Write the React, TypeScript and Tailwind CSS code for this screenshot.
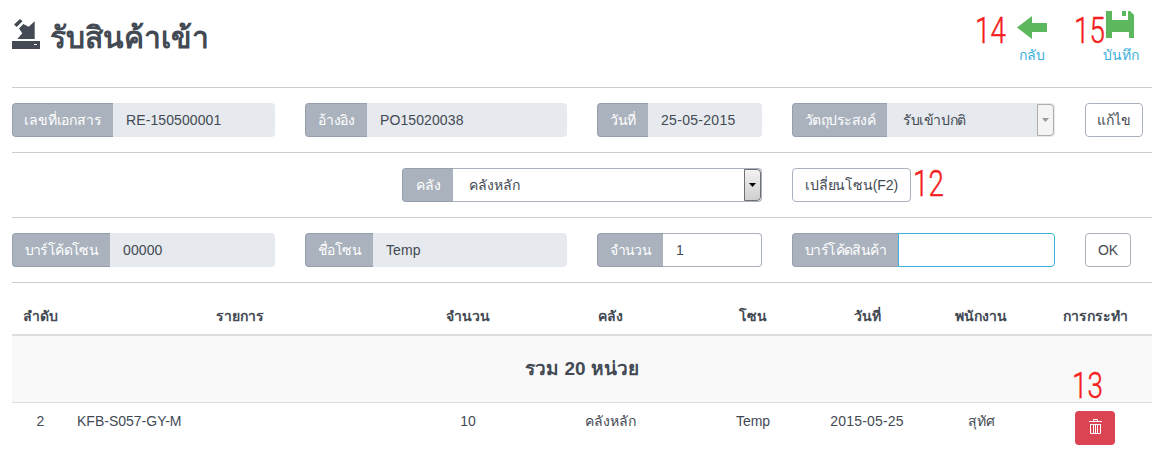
import type { ReactNode } from "react";

function Rule() {
  return <hr className="h-px w-full shrink-0 border-0 bg-[#ccc]" />;
}

function Addon({ width, children }: { width: string; children: ReactNode }) {
  return (
    <span className={`${width} flex h-full shrink-0 items-center justify-center whitespace-nowrap rounded-l border border-r-0 border-[#96a0ad] bg-[#aab2bd] text-white`}>
      {children}
    </span>
  );
}

function Field({ width, addon, label, value, look = "bg-[#e6e9ed]" }: { width: string; addon: string; label: string; value: string; look?: string }) {
  return (
    <div className={`${width} flex h-[34px] shrink-0`}>
      <Addon width={addon}>{label}</Addon>
      <span className={`flex h-full grow items-center rounded-r pl-[13px] tracking-[0.1px] ${look}`}>{value}</span>
    </div>
  );
}

function Caret({ disabled }: { disabled?: boolean }) {
  return (
    <span className={`flex h-8 w-[17px] items-center justify-center rounded-r-sm border ${disabled ? "border-[#adadad] bg-[#f4f4f4]" : "border-[#707070] bg-linear-to-b from-[#f2f2f2] to-[#cfcfcf]"}`}>
      <svg className="h-1 w-[7px]" viewBox="0 0 7 4"><path d="M0 0h7L3.5 4z" fill={disabled ? "#9b9b9b" : "#000"} /></svg>
    </span>
  );
}

function Button({ width, children }: { width: string; children: ReactNode }) {
  return <button className={`${width} flex h-[34px] shrink-0 items-center justify-center whitespace-nowrap rounded border border-[#aab2bd] bg-white tracking-[-0.15px]`}>{children}</button>;
}

function Num({ children, className }: { children: string; className: string }) {
  return (
    <span className={`absolute origin-left scale-x-[0.74] font-['Roboto'] text-[37.5px] font-light leading-[27px] text-[#f41d20] [-webkit-text-stroke:0.5px_#f41d20] ${className}`}>
      {children}
    </span>
  );
}

const heads: [string, string][] = [
  ["w-[57px]", "ลำดับ"], ["w-[342px]", "รายการ"], ["w-[114px]", "จำนวน"], ["w-[171px]", "คลัง"],
  ["w-[114px]", "โซน"], ["w-[114px]", "วันที่"], ["w-[114px]", "พนักงาน"], ["w-[114px]", "การกระทำ"],
];
const row = ["2", "KFB-S057-GY-M", "10", "คลังหลัก", "Temp", "2015-05-25", "สุทัศ"];

export default function App() {
  return (
    <main className="relative flex h-[451px] w-[1164px] flex-col overflow-hidden bg-white px-3 font-['Liberation_Sans',sans-serif] text-[14px] leading-5 text-[#434a54]">
      <header className="flex h-[87px] shrink-0 justify-between">
        <h1 className="flex items-start pt-[18px] text-[30px] font-bold leading-[40px]">
          <svg className="mr-[10px] mt-px h-[31px] w-7" viewBox="0 0 28 31" fill="#434a54">
            <path fillRule="evenodd" d="M0 22h28v8H0zM22 25v1h3v-1z" />
            <path d="M22.7 2.3V20H5.3l5-5.7L7 9.5l4.3-4.6 5.4 2.9zM2 5.5 8 0l2.5 2.2L4.7 8z" />
          </svg>
          <span>รับสินค้าเข้า</span>
        </h1>
        <nav className="flex text-[#3bafda]">
          <div className="mr-[55px] flex w-8 flex-col items-center pt-4">
            <svg className="h-[23px] w-[30px]" viewBox="0 0 30 23" fill="#5cb85c"><path d="M0 11.5 15 0v7h15v9H15v7z" /></svg>
            <span className="mt-[6px]">กลับ</span>
          </div>
          <div className="mr-[13px] flex w-9 flex-col items-center pt-[11px]">
            <svg className="mr-[2px] h-[27px] w-7" viewBox="0 0 28 27" fill="#5cb85c"><path d="M0 0h6v9h16V0h2l4 4v23h-5v-6H6v6H0zM16 0h4v5h-4z" /></svg>
            <span className="mt-[7px] tracking-[-0.1px]">บันทึก</span>
          </div>
        </nav>
      </header>
      <Rule />
      <section className="flex h-16 shrink-0 pt-[15px]">
        <Field width="mr-[30px] w-[263px]" addon="w-[101px] tracking-[-0.2px]" label="เลขที่เอกสาร" value="RE-150500001" />
        <Field width="mr-[30px] w-[262px]" addon="w-[62px] tracking-[-0.3px]" label="อ้างอิง" value="PO15020038" />
        <Field width="mr-[30px] w-[165px]" addon="w-[51px] tracking-[-0.2px]" label="วันที่" value="25-05-2015" look="bg-[#e6e9ed] tracking-[0.3px]" />
        <div className="mr-[30px] flex h-[34px] w-[263px]">
          <Addon width="w-[95px] tracking-[-0.5px]">วัตถุประสงค์</Addon>
          <span className="flex grow items-center justify-between rounded-r bg-[#e6e9ed] pl-4 pr-px"><span className="tracking-[-0.4px]">รับเข้าปกติ</span><Caret disabled /></span>
        </div>
        <Button width="w-[58px]">แก้ไข</Button>
      </section>
      <Rule />
      <section className="flex h-16 shrink-0 pl-[390px] pt-[15px]">
        <div className="mr-[30px] flex h-[34px] w-[360px]">
          <Addon width="w-[51px]">คลัง</Addon>
          <span className="flex grow items-center justify-between rounded-r border border-l-0 border-[#aab2bd] pl-4"><span>คลังหลัก</span><Caret /></span>
        </div>
        <Button width="w-[119px]">เปลี่ยนโซน(F2)</Button>
      </section>
      <Rule />
      <section className="flex h-16 shrink-0 pt-[15px]">
        <Field width="mr-[30px] w-[263px]" addon="w-[98px] tracking-[-0.6px]" label="บาร์โค้ดโซน" value="00000" />
        <Field width="mr-[30px] w-[262px]" addon="w-[68px] tracking-[-0.5px]" label="ชื่อโซน" value="Temp" />
        <Field width="mr-[30px] w-[165px]" addon="w-[66px] tracking-[-0.6px]" label="จำนวน" value="1" look="border border-l-0 border-[#aab2bd]" />
        <Field width="mr-[30px] w-[263px]" addon="w-[106px] tracking-[-0.6px]" label="บาร์โค้ดสินค้า" value="" look="border border-[#3bafda]" />
        <Button width="w-[46px]">OK</Button>
      </section>
      <Rule />
      <div className="flex h-[53px] shrink-0 items-center border-b-2 border-[#ddd] pt-[15px] font-bold">
        {heads.map(([w, t]) => <span key={t} className={`${w} shrink-0 text-center`}>{t}</span>)}
      </div>
      <div className="flex h-[66px] shrink-0 items-center justify-center bg-[#f9f9f9] text-[19px] font-bold">รวม 20 หน่วย</div>
      <div className="flex shrink-0 border-t border-[#ddd] pt-2">
        {row.map((t, i) => <span key={t} className={`${heads[i][0]} shrink-0 ${i === 1 ? "pl-2 text-left" : "text-center"} ${i === 5 ? "tracking-[0.2px]" : ""}`}>{t}</span>)}
        <span className="flex w-[114px] justify-center">
          <button className="flex h-[34px] w-10 items-center justify-center rounded bg-[#da4453]">
            <svg className="mb-[3px] h-[15px] w-[13px]" viewBox="0 0 13 15" fill="none" stroke="#fff"><path d="M0 2.5h13M4.5 2.5v-2h4v2M1.5 5v9.5h10V5M1 5.5h11M4.5 5v9M6.5 5v9M8.5 5v9" /></svg>
          </button>
        </span>
      </div>
      <Num className="left-[975px] top-[17px]">14</Num>
      <Num className="left-[1074px] top-[17px]">15</Num>
      <Num className="left-[913px] top-[170px]">12</Num>
      <Num className="left-[1072px] top-[372px]">13</Num>
    </main>
  );
}
